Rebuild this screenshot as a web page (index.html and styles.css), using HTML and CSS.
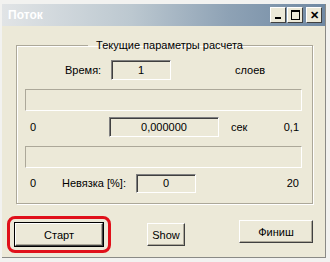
FILE: index.html
```html
<!DOCTYPE html>
<html lang="ru">

<head>
    <meta charset="UTF-8">
    <title>Поток</title>
    <link rel="stylesheet" href="styles.css">
</head>

<body>
    <div class="window">
        <div class="titlebar">
            <span class="title">Поток</span>
            <div class="controls">
                <span class="ctl ctl-min"></span>
                <span class="ctl ctl-max"></span>
                <span class="ctl ctl-close">✕</span>
            </div>
        </div>
        <div class="client">
            <fieldset class="group">
                <legend>Текущие параметры расчета</legend>
                <div class="row row-time">
                    <span class="lbl-time">Время:</span>
                    <span class="field field-time">1</span>
                    <span class="lbl-layers">слоев</span>
                </div>
                <div class="bar"></div>
                <div class="row row-sec">
                    <span class="lbl-min">0</span>
                    <span class="field field-sec">0,000000</span>
                    <span class="lbl-sec">сек</span>
                    <span class="lbl-max">0,1</span>
                </div>
                <div class="bar"></div>
                <div class="row row-err">
                    <span class="lbl-min">0</span>
                    <span class="lbl-err">Невязка [%]:</span>
                    <span class="field field-err">0</span>
                    <span class="lbl-max">20</span>
                </div>
            </fieldset>
            <div class="buttons">
                <div class="highlight">
                    <button class="btn btn-start">Старт</button>
                </div>
                <button class="btn btn-show">Show</button>
                <button class="btn btn-finish">Финиш</button>
            </div>
        </div>
    </div>
</body>

</html>
```

FILE: styles.css
```css
body {
    margin: 0;
    background-color: #f2f2f0;
    font-family: 'Liberation Sans', Arial, sans-serif;
    font-size: 11px;
    color: #000;
}

.window {
    margin: 4px 4px 0 2px;
    width: 324px;
    height: 254px;
    background-color: #ece9d8;
    border-right: 1px solid #8a8a86;
    border-bottom: 1px solid #8a8a86;
    box-sizing: border-box;
}

.titlebar {
    height: 22px;
    display: flex;
    align-items: center;
    justify-content: space-between;
    padding: 0 3px 0 6px;
    background: linear-gradient(to right, #e1e4e6 0%, #bcc8d0 40%, #8ea2b5 70%, #7089a3 100%);
}

.title {
    color: #fff;
    font-weight: bold;
    font-size: 12px;
}

.controls {
    display: flex;
    gap: 1px;
}

.ctl {
    width: 16px;
    height: 16px;
    background-color: #ece9d8;
    border-top: 1px solid #fff;
    border-left: 1px solid #fff;
    border-right: 1px solid #404040;
    border-bottom: 1px solid #404040;
    position: relative;
    box-sizing: border-box;
}

.ctl-min::after {
    content: "";
    position: absolute;
    left: 4px;
    bottom: 3px;
    width: 6px;
    height: 2px;
    background: #000;
}

.ctl-max::after {
    content: "";
    position: absolute;
    left: 3px;
    top: 2px;
    width: 7px;
    height: 7px;
    border: 1px solid #000;
    border-top-width: 2px;
}

.ctl-close {
    margin-left: 2px;
    font-size: 11px;
    font-weight: bold;
    line-height: 14px;
    text-align: center;
}

.client {
    padding: 13px 12px 0 14px;
}

.group {
    margin: 0;
    padding: 3px 10px 6px 8px;
    border: 1px solid #aca899;
    box-shadow: 1px 1px 0 #fff, inset 1px 1px 0 #fff;
    height: 165px;
    box-sizing: border-box;
}

.group legend {
    margin: 0 auto;
    padding: 0 2px;
    font-size: 11px;
    position: relative;
    left: 6px;
}

.row {
    display: flex;
    align-items: center;
    height: 20px;
}

.field {
    height: 20px;
    box-sizing: border-box;
    border-top: 1px solid #808080;
    border-left: 1px solid #808080;
    border-right: 1px solid #fff;
    border-bottom: 1px solid #fff;
    box-shadow: inset 1px 1px 0 #404040;
    display: flex;
    align-items: center;
    justify-content: center;
}

.row-time {
    margin-top: 6px;
}

.lbl-time {
    margin-left: 40px;
    width: 46px;
}

.field-time {
    width: 60px;
}

.lbl-layers {
    margin-left: 64px;
}

.bar {
    margin-top: 9px;
    height: 22px;
    border-top: 1px solid #aca899;
    border-left: 1px solid #aca899;
    border-right: 1px solid #fff;
    border-bottom: 1px solid #fff;
    box-sizing: border-box;
}

.row-sec {
    margin-top: 6px;
}

.lbl-min {
    margin-left: 5px;
    width: 8px;
}

.field-sec {
    margin-left: 71px;
    width: 110px;
}

.lbl-sec {
    margin-left: 12px;
}

.lbl-max {
    margin-left: auto;
    margin-right: 3px;
}

.row-err {
    margin-top: 5px;
}

.lbl-err {
    margin-left: 24px;
    width: 74px;
}

.field-err {
    width: 60px;
    height: 19px;
}

.buttons {
    display: flex;
    align-items: center;
    margin-top: 12px;
}

.highlight {
    margin-left: -9px;
    padding: 4px 5px;
    border: 3px solid #e0101a;
    border-radius: 8px;
}

.btn {
    font-family: inherit;
    font-size: 11px;
    background-color: #ece9d8;
    border-top: 1px solid #fff;
    border-left: 1px solid #fff;
    border-right: 1px solid #404040;
    border-bottom: 1px solid #404040;
    box-shadow: inset -1px -1px 0 #aca899;
    padding: 0;
    height: 23px;
}

.btn-start {
    width: 88px;
    outline: 1px solid #000;
}

.btn-show {
    margin-left: 36px;
    width: 38px;
}

.btn-finish {
    margin-left: auto;
    margin-top: -6px;
    width: 74px;
}
```
